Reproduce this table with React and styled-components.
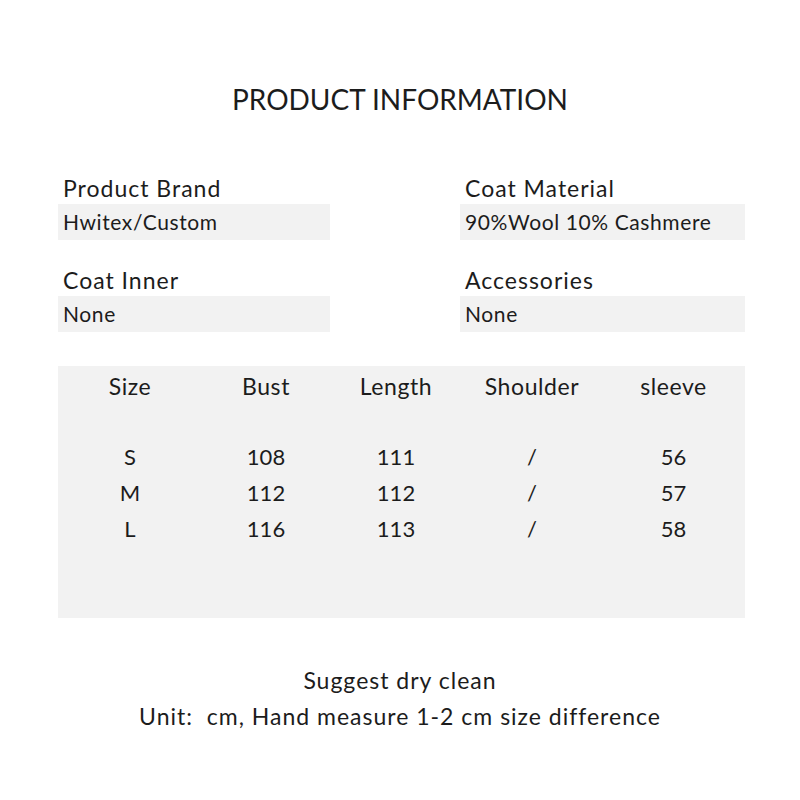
import React from 'react'
import styled, { createGlobalStyle } from 'styled-components'

const GlobalStyle = createGlobalStyle`
  body {
    margin: 0;
    background: #ffffff;
    font-family: "Lato", "Noto Sans", sans-serif;
    color: #1c1c1c;
  }
`

const info = [
  { label: 'Product Brand', value: 'Hwitex/Custom' },
  { label: 'Coat Material', value: '90%Wool 10% Cashmere' },
  { label: 'Coat Inner', value: 'None' },
  { label: 'Accessories', value: 'None' },
]

const headers = ['Size', 'Bust', 'Length', 'Shoulder', 'sleeve']
const rows = [
  ['S', '108', '111', '/', '56'],
  ['M', '112', '112', '/', '57'],
  ['L', '116', '113', '/', '58'],
]

function App() {
  return (
    <Page>
      <GlobalStyle />
      <Title>PRODUCT INFORMATION</Title>
      <InfoGrid>
        {info.map((f) => (
          <Field key={f.label}>
            <Label>{f.label}</Label>
            <Value>{f.value}</Value>
          </Field>
        ))}
      </InfoGrid>
      <SizeTable>
        <Row $head>
          {headers.map((h) => (
            <Cell key={h}>{h}</Cell>
          ))}
        </Row>
        <Body>
          {rows.map((r) => (
            <Row key={r[0]}>
              {r.map((c, i) => (
                <Cell key={i}>{c}</Cell>
              ))}
            </Row>
          ))}
        </Body>
      </SizeTable>
      <Notes>
        <p>Suggest dry clean</p>
        <p>Unit:&nbsp; cm, Hand measure 1-2 cm size difference</p>
      </Notes>
    </Page>
  )
}

export default App

const Page = styled.div`
  width: 800px;
  height: 800px;
  padding-top: 80px;
  box-sizing: border-box;
`

const Title = styled.h1`
  margin: 0;
  text-align: center;
  font-weight: 400;
  font-size: 28px;
  line-height: 38px;
  letter-spacing: 0;
`

const InfoGrid = styled.div`
  display: grid;
  grid-template-columns: 272px 285px;
  column-gap: 130px;
  row-gap: 28px;
  margin: 58px 0 0 58px;
`

const Field = styled.div`
  display: flex;
  flex-direction: column;
`

const Label = styled.div`
  font-size: 23px;
  line-height: 25px;
  padding-bottom: 3px;
  letter-spacing: 1px;
  padding-left: 5px;
`

const Value = styled.div`
  background: #f2f2f2;
  height: 36px;
  line-height: 36px;
  font-size: 21px;
  letter-spacing: 0.6px;
  padding-left: 5px;
`

const SizeTable = styled.div`
  margin: 34px 0 0 58px;
  width: 687px;
  height: 252px;
  background: #f2f2f2;
  font-size: 22px;
`

const Body = styled.div`
  margin-top: 33px;
`

const Row = styled.div`
  display: grid;
  grid-template-columns: 144px 128px 132px 140px 143px;
  line-height: ${(p) => (p.$head ? '40px' : '36px')};
  font-size: ${(p) => (p.$head ? '23px' : '22px')};
  letter-spacing: ${(p) => (p.$head ? '0.6px' : '0')};
`

const Cell = styled.div`
  text-align: center;
`

const Notes = styled.div`
  margin-top: 44px;
  text-align: center;
  font-size: 23px;
  letter-spacing: 1px;
  p {
    margin: 0;
    line-height: 36px;
  }
`
